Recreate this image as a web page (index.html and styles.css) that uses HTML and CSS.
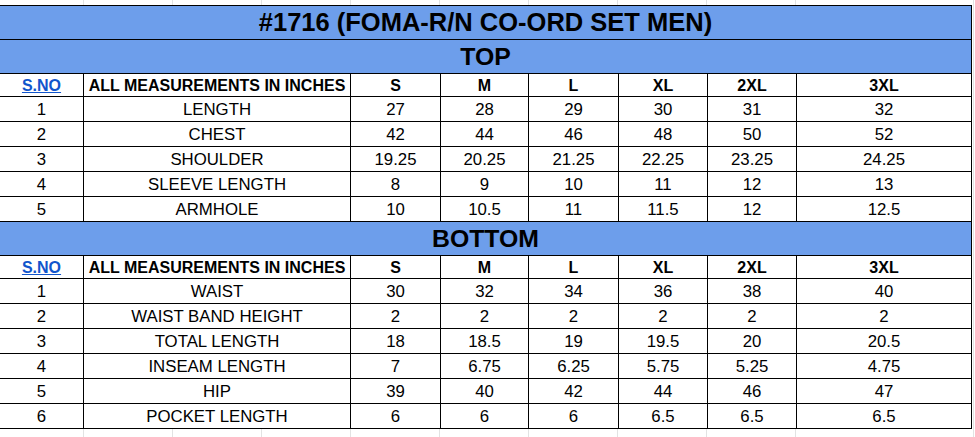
FILE: index.html
```html
<!DOCTYPE html>
<html>
<head>
<meta charset="utf-8">
<title>#1716 Size Chart</title>
<link rel="stylesheet" href="styles.css">
</head>
<body>
<div class="sheet">
<table class="chart">
<colgroup>
<col class="c-sno"><col class="c-name"><col class="c-s"><col class="c-m"><col class="c-l"><col class="c-xl"><col class="c-2xl"><col class="c-3xl">
</colgroup>
<tr class="r-title"><td colspan="8" class="title">#1716 (FOMA-R/N CO-ORD SET MEN)</td></tr>
<tr class="r-section"><td colspan="8" class="section">TOP</td></tr>
<tr class="r-head"><th><a class="link" href="#">S.NO</a></th><th>ALL MEASUREMENTS IN INCHES</th><th>S</th><th>M</th><th>L</th><th>XL</th><th>2XL</th><th>3XL</th></tr>
<tr class="r-data"><td>1</td><td>LENGTH</td><td>27</td><td>28</td><td>29</td><td>30</td><td>31</td><td>32</td></tr>
<tr class="r-data"><td>2</td><td>CHEST</td><td>42</td><td>44</td><td>46</td><td>48</td><td>50</td><td>52</td></tr>
<tr class="r-data"><td>3</td><td>SHOULDER</td><td>19.25</td><td>20.25</td><td>21.25</td><td>22.25</td><td>23.25</td><td>24.25</td></tr>
<tr class="r-data"><td>4</td><td>SLEEVE LENGTH</td><td>8</td><td>9</td><td>10</td><td>11</td><td>12</td><td>13</td></tr>
<tr class="r-data"><td>5</td><td>ARMHOLE</td><td>10</td><td>10.5</td><td>11</td><td>11.5</td><td>12</td><td>12.5</td></tr>
<tr class="r-section"><td colspan="8" class="section">BOTTOM</td></tr>
<tr class="r-head"><th><a class="link" href="#">S.NO</a></th><th>ALL MEASUREMENTS IN INCHES</th><th>S</th><th>M</th><th>L</th><th>XL</th><th>2XL</th><th>3XL</th></tr>
<tr class="r-data"><td>1</td><td>WAIST</td><td>30</td><td>32</td><td>34</td><td>36</td><td>38</td><td>40</td></tr>
<tr class="r-data"><td>2</td><td>WAIST BAND HEIGHT</td><td>2</td><td>2</td><td>2</td><td>2</td><td>2</td><td>2</td></tr>
<tr class="r-data"><td>3</td><td>TOTAL LENGTH</td><td>18</td><td>18.5</td><td>19</td><td>19.5</td><td>20</td><td>20.5</td></tr>
<tr class="r-data"><td>4</td><td>INSEAM LENGTH</td><td>7</td><td>6.75</td><td>6.25</td><td>5.75</td><td>5.25</td><td>4.75</td></tr>
<tr class="r-data"><td>5</td><td>HIP</td><td>39</td><td>40</td><td>42</td><td>44</td><td>46</td><td>47</td></tr>
<tr class="r-data"><td>6</td><td>POCKET LENGTH</td><td>6</td><td>6</td><td>6</td><td>6.5</td><td>6.5</td><td>6.5</td></tr>
</table>
</div>
</body>
</html>
```
FILE: styles.css
```css
html, body {
  margin: 0;
  padding: 0;
  background: #ffffff;
}
.sheet {
  width: 975px;
  height: 437px;
  overflow: hidden;
  padding-top: 5px;
  box-sizing: border-box;
  background-color: #ffffff;
  background-image:
    linear-gradient(#e2e3e3, #e2e3e3),
    linear-gradient(#e2e3e3, #e2e3e3),
    linear-gradient(#e2e3e3, #e2e3e3),
    linear-gradient(#e2e3e3, #e2e3e3),
    linear-gradient(#e2e3e3, #e2e3e3),
    linear-gradient(#e2e3e3, #e2e3e3),
    linear-gradient(#e2e3e3, #e2e3e3),
    linear-gradient(#e2e3e3, #e2e3e3),
    linear-gradient(#e2e3e3, #e2e3e3),
    linear-gradient(#e2e3e3, #e2e3e3);
  background-size: 1px 100%;
  background-repeat: no-repeat;
  background-position: 83px 0, 172px 0, 261px 0, 350px 0, 439px 0, 528px 0, 617px 0, 706px 0, 795px 0, 973px 0;
  font-family: "Liberation Sans", Arial, sans-serif;
  color: #000000;
}
.chart {
  border-collapse: collapse;
  table-layout: fixed;
  margin-left: -1px;
  background: #ffffff;
}
.chart td, .chart th {
  border: 1px solid #000000;
  padding: 0 2px 2px;
  text-align: center;
  vertical-align: bottom;
  white-space: nowrap;
  overflow: hidden;
  line-height: normal;
}
.c-sno { width: 84px; }
.c-name { width: 267px; }
.c-s { width: 90px; }
.c-m { width: 88px; }
.c-l { width: 90px; }
.c-xl { width: 89px; }
.c-2xl { width: 89px; }
.c-3xl { width: 175px; }

.r-title { height: 34px; }
.r-section { height: 34px; }
.r-head { height: 23px; }
.r-data { height: 25px; }

.title {
  background: #6d9eeb;
  font-weight: bold;
  font-size: 25.5px;
  padding-bottom: 2px;
}
.section {
  background: #6d9eeb;
  font-weight: bold;
  font-size: 24.8px;
  padding-bottom: 2px;
}
.r-head th {
  font-weight: bold;
  font-size: 16px;
  padding-bottom: 1px;
}
.r-data td {
  font-size: 16.8px;
  font-weight: normal;
  padding-bottom: 1px;
}
.link {
  color: #1155cc;
  text-decoration: underline;
}
```
